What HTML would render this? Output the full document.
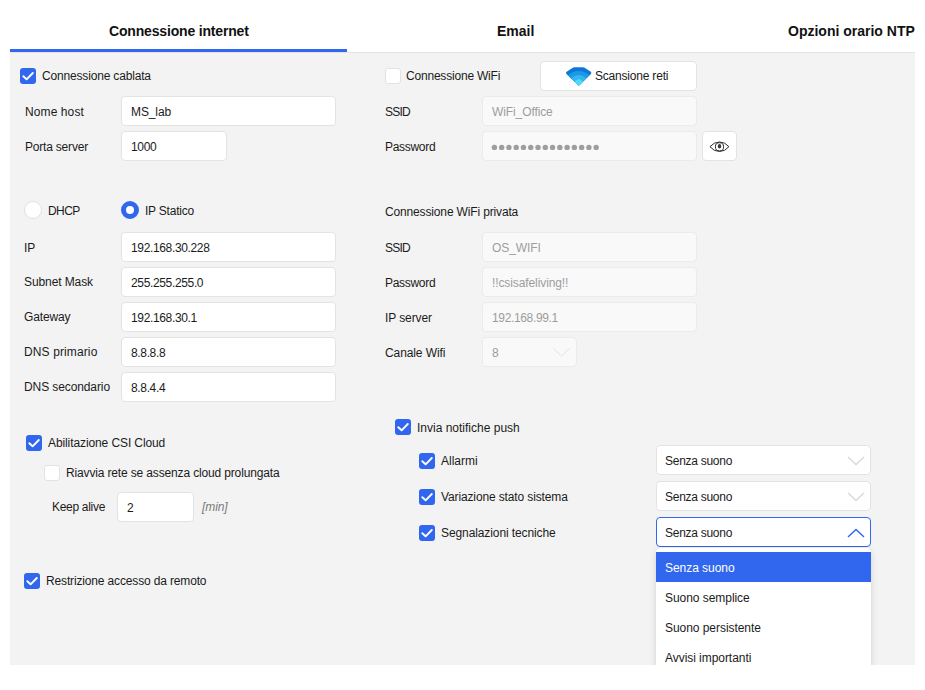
<!DOCTYPE html>
<html><head><meta charset="utf-8">
<style>
*{box-sizing:border-box;margin:0;padding:0}
html,body{width:925px;height:690px;background:#fff;overflow:hidden;font-family:"Liberation Sans",sans-serif;color:#1b1b1b;font-size:12px}
.a{position:absolute}
.tab{position:absolute;top:23px;font-weight:bold;font-size:14px;line-height:16px;color:#111;white-space:nowrap}
.lbl{position:absolute;white-space:nowrap;font-size:12px;line-height:14px;letter-spacing:-0.1px}
.inp{position:absolute;background:#fff;border:1px solid #e3e3e3;border-radius:4px;font-size:12px;line-height:30px;padding-left:9px;white-space:nowrap;letter-spacing:-0.1px}
.num{letter-spacing:-0.35px;padding-left:9px}
.dis{background:#f9f9f9;border-color:#ebebeb;color:#9d9d9d}
.cb{position:absolute;width:16px;height:16px;border-radius:3px;background:#fff;border:1px solid #e2e2e2}
.cb.on{background:#3067ee;border:none}
.rad{position:absolute;width:18px;height:18px;border-radius:50%;background:#fff;border:1px solid #e0e0e0}
.rad.on{background:#fff;border:5px solid #3067ee}
.it{position:absolute;left:0;width:215px;height:30px;line-height:32px;padding-left:9px;font-size:12px;white-space:nowrap;letter-spacing:-0.05px}
</style></head><body>

<div class="tab" style="left:109px;letter-spacing:-0.17px">Connessione internet</div>
<div class="tab" style="left:497px">Email</div>
<div class="tab" style="left:788px">Opzioni orario NTP</div>
<div class="a" style="left:10px;top:52px;width:905px;height:613px;background:#f3f3f3"></div>
<div class="a" style="left:10px;top:52px;width:905px;height:1px;background:#e4e4e4"></div>
<div class="a" style="left:10px;top:49px;width:337px;height:3px;background:#3067ee"></div>
<div class="cb on" style="left:20px;top:68px"><svg width="16" height="16" viewBox="0 0 16 16" style="position:absolute;left:0;top:0"><path d="M3.3 8.2 L6.6 11.3 L12.8 5" fill="none" stroke="#fff" stroke-width="1.9" stroke-linecap="round" stroke-linejoin="round"/></svg></div>
<div class="lbl" style="left:42px;top:69px;letter-spacing:-0.17px">Connessione cablata</div>
<div class="lbl" style="left:25px;top:105px;letter-spacing:0.1px">Nome host</div>
<div class="inp " style="left:121px;top:96px;width:215px;height:30px;">MS_lab</div>
<div class="lbl" style="left:25px;top:140px;letter-spacing:-0.2px">Porta server</div>
<div class="inp num" style="left:121px;top:131px;width:106px;height:30px;">1000</div>
<div class="rad" style="left:24px;top:201px"></div>
<div class="lbl" style="left:48px;top:204px;letter-spacing:-0.6px">DHCP</div>
<div class="rad on" style="left:121px;top:201px"></div>
<div class="lbl" style="left:145px;top:204px;letter-spacing:-0.22px">IP Statico</div>
<div class="lbl" style="left:24px;top:241px;">IP</div>
<div class="inp num" style="left:121px;top:232px;width:215px;height:30px;">192.168.30.228</div>
<div class="lbl" style="left:24px;top:275px;letter-spacing:-0.1px">Subnet Mask</div>
<div class="inp num" style="left:121px;top:267px;width:215px;height:30px;">255.255.255.0</div>
<div class="lbl" style="left:24px;top:310px;letter-spacing:-0.15px">Gateway</div>
<div class="inp num" style="left:121px;top:302px;width:215px;height:30px;">192.168.30.1</div>
<div class="lbl" style="left:24px;top:345px;letter-spacing:0.12px">DNS primario</div>
<div class="inp num" style="left:121px;top:337px;width:215px;height:30px;">8.8.8.8</div>
<div class="lbl" style="left:24px;top:380px;letter-spacing:-0.1px">DNS secondario</div>
<div class="inp num" style="left:121px;top:372px;width:215px;height:30px;">8.8.4.4</div>
<div class="cb on" style="left:26px;top:435px"><svg width="16" height="16" viewBox="0 0 16 16" style="position:absolute;left:0;top:0"><path d="M3.3 8.2 L6.6 11.3 L12.8 5" fill="none" stroke="#fff" stroke-width="1.9" stroke-linecap="round" stroke-linejoin="round"/></svg></div>
<div class="lbl" style="left:48px;top:436px;">Abilitazione CSI Cloud</div>
<div class="cb" style="left:44px;top:465px"></div>
<div class="lbl" style="left:66px;top:466px;letter-spacing:-0.15px">Riavvia rete se assenza cloud prolungata</div>
<div class="lbl" style="left:52px;top:500px;letter-spacing:-0.3px">Keep alive</div>
<div class="inp num" style="left:117px;top:492px;width:77px;height:30px;">2</div>
<div class="lbl" style="left:202px;top:500px;font-style:italic;color:#7a7a7a">[min]</div>
<div class="cb on" style="left:24px;top:573px"><svg width="16" height="16" viewBox="0 0 16 16" style="position:absolute;left:0;top:0"><path d="M3.3 8.2 L6.6 11.3 L12.8 5" fill="none" stroke="#fff" stroke-width="1.9" stroke-linecap="round" stroke-linejoin="round"/></svg></div>
<div class="lbl" style="left:46px;top:574px;letter-spacing:-0.15px">Restrizione accesso da remoto</div>
<div class="cb" style="left:385px;top:68px"></div>
<div class="lbl" style="left:406px;top:69px;letter-spacing:-0.2px">Connessione WiFi</div>
<div class="inp" style="left:540px;top:61px;width:157px;height:30px;padding:0">
<svg class="a" style="left:24px;top:4px" width="28" height="21" viewBox="0 0 28 21">
<defs><clipPath id="wc"><path d="M13.7 19.8 L1.5 8.1 Q0.4 6.9 1.6 5.8 L7.4 1.9 Q8.4 1.2 9.6 1.2 L17.8 1.2 Q19 1.2 20 1.9 L25.8 5.8 Q27 6.9 25.9 8.1 Z"/></clipPath></defs>
<g clip-path="url(#wc)">
<rect x="0" y="0" width="28" height="21" fill="#0b78d6"/>
<circle cx="13.7" cy="20.3" r="15.4" fill="#1e97e7"/>
<circle cx="13.7" cy="18.5" r="9.5" fill="#34b7ef"/>
<circle cx="13.7" cy="17.4" r="4.2" fill="#4fd9fb"/>
</g></svg>
<span class="a" style="left:54px;top:0;letter-spacing:-0.2px;line-height:29px">Scansione reti</span></div>
<div class="lbl" style="left:385px;top:105px;letter-spacing:-0.8px">SSID</div>
<div class="inp dis" style="left:482px;top:96px;width:215px;height:30px;">WiFi_Office</div>
<div class="lbl" style="left:385px;top:140px;letter-spacing:-0.3px">Password</div>
<div class="inp dis" style="left:482px;top:131px;width:215px;height:30px;padding:0"><svg class="a" style="left:-1px;top:-1px" width="215" height="30"><circle cx="12.40" cy="16.4" r="2.7" fill="#9e9e9e"/><circle cx="19.67" cy="16.4" r="2.7" fill="#9e9e9e"/><circle cx="26.94" cy="16.4" r="2.7" fill="#9e9e9e"/><circle cx="34.21" cy="16.4" r="2.7" fill="#9e9e9e"/><circle cx="41.48" cy="16.4" r="2.7" fill="#9e9e9e"/><circle cx="48.75" cy="16.4" r="2.7" fill="#9e9e9e"/><circle cx="56.02" cy="16.4" r="2.7" fill="#9e9e9e"/><circle cx="63.29" cy="16.4" r="2.7" fill="#9e9e9e"/><circle cx="70.56" cy="16.4" r="2.7" fill="#9e9e9e"/><circle cx="77.83" cy="16.4" r="2.7" fill="#9e9e9e"/><circle cx="85.10" cy="16.4" r="2.7" fill="#9e9e9e"/><circle cx="92.37" cy="16.4" r="2.7" fill="#9e9e9e"/><circle cx="99.64" cy="16.4" r="2.7" fill="#9e9e9e"/><circle cx="106.91" cy="16.4" r="2.7" fill="#9e9e9e"/><circle cx="114.18" cy="16.4" r="2.7" fill="#9e9e9e"/></svg></div>
<div class="inp" style="left:702px;top:131px;width:35px;height:30px;padding:0">
<svg class="a" style="left:5px;top:7.5px" width="23" height="14" viewBox="0 0 23 14">
<defs><clipPath id="ec"><path d="M1.9 6.7 Q6 2 11.5 2 Q17 2 20.9 6.7 Q17 11.5 11.5 11.5 Q6 11.5 1.9 6.7Z"/></clipPath></defs>
<path d="M1.9 6.7 Q6 2 11.5 2 Q17 2 20.9 6.7 Q17 11.5 11.5 11.5 Q6 11.5 1.9 6.7Z" fill="none" stroke="#2b2b2b" stroke-width="1"/>
<g clip-path="url(#ec)"><circle cx="11.5" cy="6.8" r="4.1" fill="none" stroke="#2b2b2b" stroke-width="1"/></g>
<ellipse cx="11.5" cy="6.2" rx="1.7" ry="2.2" fill="#3a3a3a"/>
</svg></div>
<div class="lbl" style="left:385px;top:205px;letter-spacing:-0.15px">Connessione WiFi privata</div>
<div class="lbl" style="left:385px;top:241px;letter-spacing:-0.8px">SSID</div>
<div class="inp dis" style="left:482px;top:232px;width:215px;height:30px;">OS_WIFI</div>
<div class="lbl" style="left:385px;top:276px;letter-spacing:-0.3px">Password</div>
<div class="inp dis" style="left:482px;top:267px;width:215px;height:30px;">!!csisafeliving!!</div>
<div class="lbl" style="left:385px;top:311px;letter-spacing:-0.1px">IP server</div>
<div class="inp dis num" style="left:482px;top:302px;width:215px;height:30px;">192.168.99.1</div>
<div class="lbl" style="left:385px;top:346px;">Canale Wifi</div>
<div class="inp dis" style="left:482px;top:337px;width:95px;height:30px">8<svg width="17" height="9" viewBox="0 0 17 9" style="position:absolute;left:70px;top:10px"><path d="M0.5 0.5 L8.5 8.2 L16.5 0.5" fill="none" stroke="#e2e2e2" stroke-width="1"/></svg></div>
<div class="cb on" style="left:395px;top:419px"><svg width="16" height="16" viewBox="0 0 16 16" style="position:absolute;left:0;top:0"><path d="M3.3 8.2 L6.6 11.3 L12.8 5" fill="none" stroke="#fff" stroke-width="1.9" stroke-linecap="round" stroke-linejoin="round"/></svg></div>
<div class="lbl" style="left:417px;top:421px;letter-spacing:0px">Invia notifiche push</div>
<div class="cb on" style="left:419px;top:453px"><svg width="16" height="16" viewBox="0 0 16 16" style="position:absolute;left:0;top:0"><path d="M3.3 8.2 L6.6 11.3 L12.8 5" fill="none" stroke="#fff" stroke-width="1.9" stroke-linecap="round" stroke-linejoin="round"/></svg></div>
<div class="lbl" style="left:441px;top:454px;letter-spacing:0px">Allarmi</div>
<div class="inp" style="left:656px;top:445px;width:215px;height:30px;padding-left:8px;letter-spacing:-0.27px">Senza suono<svg width="18" height="10" viewBox="0 0 18 10" style="position:absolute;right:5px;top:9.5px"><path d="M1 1 L9 8.6 L17 1" fill="none" stroke="#d9d9d9" stroke-width="1.4"/></svg></div>
<div class="cb on" style="left:419px;top:489px"><svg width="16" height="16" viewBox="0 0 16 16" style="position:absolute;left:0;top:0"><path d="M3.3 8.2 L6.6 11.3 L12.8 5" fill="none" stroke="#fff" stroke-width="1.9" stroke-linecap="round" stroke-linejoin="round"/></svg></div>
<div class="lbl" style="left:441px;top:490px;letter-spacing:-0.13px">Variazione stato sistema</div>
<div class="inp" style="left:656px;top:481px;width:215px;height:30px;padding-left:8px;letter-spacing:-0.27px">Senza suono<svg width="18" height="10" viewBox="0 0 18 10" style="position:absolute;right:5px;top:9.5px"><path d="M1 1 L9 8.6 L17 1" fill="none" stroke="#d9d9d9" stroke-width="1.4"/></svg></div>
<div class="cb on" style="left:419px;top:525px"><svg width="16" height="16" viewBox="0 0 16 16" style="position:absolute;left:0;top:0"><path d="M3.3 8.2 L6.6 11.3 L12.8 5" fill="none" stroke="#fff" stroke-width="1.9" stroke-linecap="round" stroke-linejoin="round"/></svg></div>
<div class="lbl" style="left:441px;top:526px;letter-spacing:-0.1px">Segnalazioni tecniche</div>
<div class="inp" style="left:656px;top:517px;width:215px;height:30px;padding-left:8px;letter-spacing:-0.27px;border-color:#3067ee">Senza suono<svg width="18" height="10" viewBox="0 0 18 10" style="position:absolute;right:5px;top:9.5px"><path d="M1 9 L9 1.4 L17 9" fill="none" stroke="#3067ee" stroke-width="1.4"/></svg></div>
<div class="a" style="left:640px;top:545px;width:250px;height:120px;overflow:hidden">
<div class="a" style="left:16px;top:3px;width:215px;height:150px;background:#fff;border-radius:5px;box-shadow:0 2px 7px rgba(0,0,0,.14)">
<div class="it" style="top:4px;background:#3067ee;color:#fff">Senza suono</div>
<div class="it" style="top:34px">Suono semplice</div>
<div class="it" style="top:64px">Suono persistente</div>
<div class="it" style="top:94px">Avvisi importanti</div>
</div></div>
</body></html>
